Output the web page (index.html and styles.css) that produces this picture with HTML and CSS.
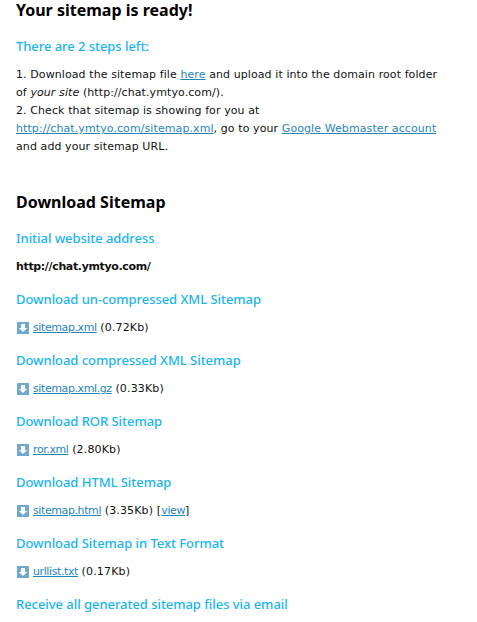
FILE: index.html
```
<!DOCTYPE html>
<html lang="en">
<head>
<meta charset="utf-8">
<title>Your sitemap is ready</title>
<link rel="stylesheet" href="styles.css">
</head>
<body>
<main class="page">
  <h1 class="title">Your sitemap is ready!</h1>
  <h2 class="sub first">There are 2 steps left:</h2>
  <p class="steps">1. Download the sitemap file <a href="#">here</a> and upload it into the domain root folder<br>
  of <em>your site</em> (http://chat.ymtyo.com/).<br>
  2. Check that sitemap is showing for you at<br>
  <a href="#">http://chat.ymtyo.com/sitemap.xml</a>, go to your <a href="#">Google Webmaster account</a><br>
  and add your sitemap URL.</p>

  <h1 class="title second">Download Sitemap</h1>
  <h2 class="sub">Initial website address</h2>
  <p class="row"><strong>http://chat.ymtyo.com/</strong></p>

  <h2 class="sub">Download un-compressed XML Sitemap</h2>
  <p class="row"><svg class="ico" viewBox="0 0 12 12"><rect width="12" height="12" fill="#6fa9d0"/><path d="M4 2h4v4h2.200L6 10 1.800 6H4z" fill="#fff"/></svg><a href="#">sitemap.xml</a> (0.72Kb)</p>

  <h2 class="sub">Download compressed XML Sitemap</h2>
  <p class="row"><svg class="ico" viewBox="0 0 12 12"><rect width="12" height="12" fill="#6fa9d0"/><path d="M4 2h4v4h2.200L6 10 1.800 6H4z" fill="#fff"/></svg><a href="#">sitemap.xml.gz</a> (0.33Kb)</p>

  <h2 class="sub">Download ROR Sitemap</h2>
  <p class="row"><svg class="ico" viewBox="0 0 12 12"><rect width="12" height="12" fill="#6fa9d0"/><path d="M4 2h4v4h2.200L6 10 1.800 6H4z" fill="#fff"/></svg><a href="#">ror.xml</a> (2.80Kb)</p>

  <h2 class="sub">Download HTML Sitemap</h2>
  <p class="row"><svg class="ico" viewBox="0 0 12 12"><rect width="12" height="12" fill="#6fa9d0"/><path d="M4 2h4v4h2.200L6 10 1.800 6H4z" fill="#fff"/></svg><a href="#">sitemap.html</a> (3.35Kb) [<a href="#">view</a>]</p>

  <h2 class="sub">Download Sitemap in Text Format</h2>
  <p class="row"><svg class="ico" viewBox="0 0 12 12"><rect width="12" height="12" fill="#6fa9d0"/><path d="M4 2h4v4h2.200L6 10 1.800 6H4z" fill="#fff"/></svg><a href="#">urllist.txt</a> (0.17Kb)</p>

  <h2 class="sub">Receive all generated sitemap files via email</h2>
</main>
</body>
</html>
```
FILE: styles.css
```
html, body { margin: 0; padding: 0; background: #fff; overflow: hidden; }
.page { padding: 0 0 0 16px; font-family: "DejaVu Sans", sans-serif; font-size: 11px; color: #111; }
.title { margin: 0; font-family: "Noto Sans", sans-serif; font-size: 16px; line-height: 20px; font-weight: 700; color: #000; }
.second { margin-top: 36px; }
.sub { margin: 14px 0 0; font-family: "Noto Sans", sans-serif; font-size: 13px; line-height: 18px; font-weight: 500; color: #19b5ef; letter-spacing: -0.05px; }
.first { margin-top: 17px; }
.second + .sub { margin-top: 17px; }
.steps { margin: 11px 0 0; line-height: 18px; letter-spacing: 0.09px; }
.row { margin: 11px 0 0; line-height: 18px; letter-spacing: 0.15px; }
.row strong { letter-spacing: -0.35px; }
.row a { letter-spacing: -0.4px; }
.ico { width: 12px; height: 12px; margin: 0 4px -3px 1px; }
a { color: #1f86b8; }
```
